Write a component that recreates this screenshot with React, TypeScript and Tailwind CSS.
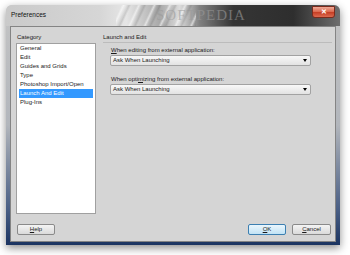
import React from "react";

const font = { fontFamily: '"Liberation Sans", Arial, sans-serif' };

function Dropdown() {
  return (
    <div className="flex h-[11px] w-[201px] items-center justify-between rounded-[2px] border border-[#a2a2a2] bg-[linear-gradient(#f8f8f8,#e2e2e2)] pl-[2px] pr-[3px]">
      <span className="text-[6px] leading-[9px] text-[#1a1a1a]">Ask When Launching</span>
      <span className="h-0 w-0 border-l-[2.5px] border-r-[2.5px] border-t-[3px] border-l-transparent border-r-transparent border-t-black" />
    </div>
  );
}

function Button({ children, primary }: { children: React.ReactNode; primary?: boolean }) {
  return (
    <div
      className={
        "flex h-[11px] items-center justify-center rounded-[2px] border text-[6px] leading-[9px] text-[#1a1a1a] " +
        (primary
          ? "border-[#3c7fb1] bg-[linear-gradient(#eaf6fd,#c2e3f5)]"
          : "border-[#8a8a8a] bg-[linear-gradient(#f4f4f4,#dadada)]")
      }
    >
      {children}
    </div>
  );
}

export default function App() {
  const items = [
    "General",
    "Edit",
    "Guides and Grids",
    "Type",
    "Photoshop Import/Open",
    "Launch And Edit",
    "Plug-Ins",
  ];
  return (
    <div className="h-[255px] w-[350px] bg-white pl-[6px] pt-[5px]" style={font}>
      <div className="flex h-[240px] w-[334px] flex-col overflow-hidden rounded-t-[6px] bg-[linear-gradient(180deg,#c4c4c4_0%,#b2b6bc_50%,#4a5f85_85%,#1b3461_100%)] shadow-[0_3px_8px_rgba(0,0,0,0.45)]">
        {/* title bar */}
        <div className="relative flex h-[21px] items-start justify-between bg-[linear-gradient(90deg,#cacaca_0%,#d6d6d6_28%,#e6e6e6_36%,#a8a8a8_46%,#dcdcdc_52%,#808080_58%,#353535_68%,#2e2e2e_86%,#6e6e6e_100%)]">
          <div className="pointer-events-none absolute left-[110px] top-0 h-[21px] w-[80px] bg-[repeating-linear-gradient(115deg,rgba(255,255,255,0)_0px,rgba(255,255,255,0)_5px,rgba(255,255,255,0.55)_7px,rgba(255,255,255,0)_9px,rgba(0,0,0,0.12)_12px,rgba(0,0,0,0)_14px)]" />
          <div className="pointer-events-none absolute left-[150px] top-[1px] text-[15px] leading-[18px] tracking-[1px] text-[#9a9a9a] opacity-60" style={{ fontFamily: '"Liberation Serif", serif' }}>
            SOFTPEDIA
          </div>
          <span className="relative ml-[5px] mt-[5px] text-[6.5px] leading-[9px] text-[#111]">Preferences</span>
          <div className="relative mr-[5px] mt-[1px] flex h-[12px] w-[23px] items-center justify-center rounded-b-[3px] border border-[#7a2a1c] bg-[linear-gradient(#eeaa98_0%,#dc6c52_45%,#c64026_55%,#dc6a50_100%)]">
            <span className="text-[6.5px] font-bold leading-[8px] text-white">✕</span>
          </div>
        </div>
        {/* client */}
        <div className="mx-[4px] flex h-[216px] w-[326px] flex-col border border-[#848484] bg-[#d5d5d5] pt-[6px]">
          <div className="flex h-[181px] pl-[5px] pr-[2px]">
            <div className="flex w-[80px] flex-col">
              <div className="h-[10px] pl-[1px] text-[6px] leading-[9px] text-[#1a1a1a]">Category</div>
              <div className="flex h-[171px] flex-col border border-[#a0a0a0] bg-white px-[2px]">
                {items.map((it) => (
                  <div
                    key={it}
                    className={
                      "h-[9px] pl-[1px] text-[6px] leading-[9px] " +
                      (it === "Launch And Edit" ? "bg-[#3399ff] text-white" : "text-[#1a1a1a]")
                    }
                  >
                    {it}
                  </div>
                ))}
              </div>
            </div>
            <div className="ml-[7px] flex w-[229px] flex-col">
              <div className="h-[10px] border-b border-[#bcbcbc] text-[6px] leading-[9px] text-[#1a1a1a]">Launch and Edit</div>
              <div className="flex flex-col pl-[7px]">
                <div className="mt-[3px] h-[9px] pl-[1px] text-[6px] leading-[9px] text-[#1a1a1a]">
                  <span className="underline">W</span>hen editing from external application:
                </div>
                <Dropdown />
                <div className="mt-[9px] h-[9px] pl-[1px] text-[6px] leading-[9px] text-[#1a1a1a]">
                  When opti<span className="underline">m</span>izing from external application:
                </div>
                <Dropdown />
              </div>
            </div>
          </div>
          <div className="mt-[10px] flex items-start justify-between pl-[6px] pr-[4px]">
            <div className="w-[38px]">
              <Button>
                <span className="underline">H</span>elp
              </Button>
            </div>
            <div className="flex gap-[6px]">
              <div className="w-[38px]">
                <Button primary>
                  <span className="underline">O</span>K
                </Button>
              </div>
              <div className="w-[39px]">
                <Button>
                  <span className="underline">C</span>ancel
                </Button>
              </div>
            </div>
          </div>
        </div>
      </div>
    </div>
  );
}
